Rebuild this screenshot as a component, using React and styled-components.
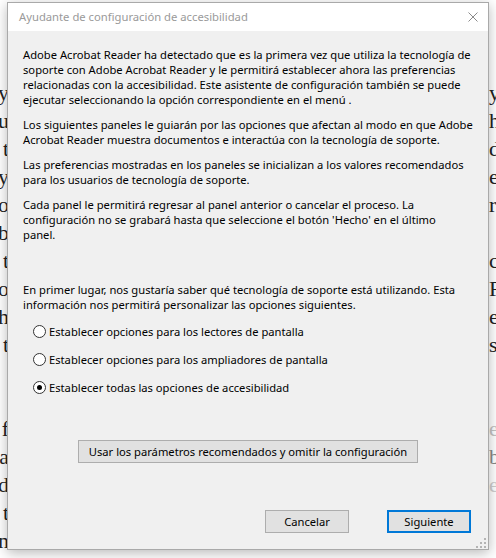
import React from "react";
import styled, { createGlobalStyle } from "styled-components";

const GlobalStyle = createGlobalStyle`
  html, body { margin: 0; padding: 0; background: #ffffff; }
  body { overflow: hidden; }
`;

const Page = styled.div`
  position: relative;
  width: 496px;
  height: 558px;
  overflow: hidden;
  background: #ffffff;
`;

/* ---------- background document (peeks out at the edges) ---------- */
const DocLines = styled.div`
  display: flex;
  flex-direction: column;
  padding-top: 79px;
  font-family: "Liberation Serif", "Times New Roman", serif;
  font-size: 22px;
  color: #222222;
`;

const DocRow = styled.div`
  display: flex;
  justify-content: space-between;
  height: 28px;
  line-height: 28px;
`;

const DocLeft = styled.div`
  width: 9px;
  display: flex;
  justify-content: flex-end;
  white-space: nowrap;
  color: ${(p) => p.$color || "#222222"};
`;

const DocRight = styled.div`
  width: 7px;
  white-space: nowrap;
  color: ${(p) => p.$color || "#222222"};
`;

/* ---------- dialog ---------- */
const Dialog = styled.div`
  position: absolute;
  left: 7px;
  top: 2px;
  width: 482px;
  height: 548px;
  box-sizing: border-box;
  border: 1px solid #a9a9a9;
  background: #f0f0f0;
  box-shadow: 0 3px 12px rgba(0, 0, 0, 0.28);
  display: flex;
  flex-direction: column;
  font-family: "Noto Sans", "Segoe UI", sans-serif;
  font-size: 11.2px;
  color: #000000;
`;

const TitleBar = styled.div`
  height: 28px;
  flex: none;
  background: #ffffff;
  display: flex;
  align-items: center;
  justify-content: space-between;
  padding: 0 10px 0 11px;
`;

const Title = styled.div`
  color: #9a9a9a;
  font-size: 11.25px;
  line-height: 15px;
  padding-bottom: 1px;
`;

const CloseIcon = styled.svg`
  width: 10px;
  height: 10px;
  display: block;
`;

const Body = styled.div`
  flex: 1;
  display: flex;
  flex-direction: column;
  padding: 16px 17px 16px 15px;
  position: relative;
`;

const Para = styled.p`
  margin: 0 0 10px 0;
  line-height: 15px;
  white-space: nowrap;
`;

const Intro = styled.p`
  margin: 30px 0 0 0;
  line-height: 15px;
  white-space: nowrap;
`;

const RadioGroup = styled.div`
  display: flex;
  flex-direction: column;
  margin-top: 5px;
  padding-left: 10px;
`;

const RadioRow = styled.label`
  height: 28px;
  display: flex;
  align-items: center;
  gap: 3px;
  line-height: 15px;
`;

const RadioCircle = styled.span`
  width: 13px;
  height: 13px;
  box-sizing: border-box;
  border: 1px solid #333333;
  border-radius: 50%;
  background: #ffffff;
  display: flex;
  align-items: center;
  justify-content: center;
  flex: none;
  &::after {
    content: "";
    width: 5px;
    height: 5px;
    border-radius: 50%;
    background: #000000;
    display: ${(p) => (p.$checked ? "block" : "none")};
  }
`;

const Button = styled.button`
  height: 23px;
  width: ${(p) => p.$width}px;
  box-sizing: border-box;
  border: ${(p) => (p.$default ? "2px solid #0078d7" : "1px solid #adadad")};
  background: #e1e1e1;
  font-family: "Noto Sans", "Segoe UI", sans-serif;
  font-size: 11.2px;
  color: #000000;
  padding: 0;
  margin: 0;
  line-height: 15px;
  display: flex;
  align-items: center;
  justify-content: center;
  flex: none;
`;

const CenterRow = styled.div`
  display: flex;
  justify-content: center;
  margin-top: 39px;
  margin-right: -2px;
`;

const Footer = styled.div`
  margin-top: auto;
  display: flex;
  justify-content: flex-end;
  gap: 38px;
`;

const Grip = styled.svg`
  position: absolute;
  right: 2px;
  bottom: 1px;
  width: 10px;
  height: 10px;
`;

const docRows = [
  ["y", "y"],
  ["u", "h"],
  ["t", "d"],
  ["y", "e"],
  ["o", "r"],
  ["b", ""],
  ["t", "c"],
  ["o", "R"],
  ["h", "e"],
  ["t", "s"],
  ["", ""],
  ["", ""],
  ["f", "e", "#c4c4c4"],
  ["a", "b", "#8a8a8a"],
  ["d", "e", "#cfcfcf"],
  ["t", ""],
  ["n", ""],
];

const paragraphs = [
  [
    "Adobe Acrobat Reader ha detectado que es la primera vez que utiliza la tecnología de",
    "soporte con Adobe Acrobat Reader y le permitirá establecer ahora las preferencias",
    "relacionadas con la accesibilidad. Este asistente de configuración también se puede",
    "ejecutar seleccionando la opción correspondiente en el menú .",
  ],
  [
    "Los siguientes paneles le guiarán por las opciones que afectan al modo en que Adobe",
    "Acrobat Reader muestra documentos e interactúa con la tecnología de soporte.",
  ],
  [
    "Las preferencias mostradas en los paneles se inicializan a los valores recomendados",
    "para los usuarios de tecnología de soporte.",
  ],
  [
    "Cada panel le permitirá regresar al panel anterior o cancelar el proceso. La",
    "configuración no se grabará hasta que seleccione el botón 'Hecho' en el último",
    "panel.",
  ],
];

const options = [
  { label: "Establecer opciones para los lectores de pantalla", checked: false },
  { label: "Establecer opciones para los ampliadores de pantalla", checked: false },
  { label: "Establecer todas las opciones de accesibilidad", checked: true },
];

const Lines = ({ lines }) =>
  lines.map((l, i) => (
    <React.Fragment key={i}>
      {l}
      {i < lines.length - 1 && <br />}
    </React.Fragment>
  ));

export default function App() {
  return (
    <Page>
      <GlobalStyle />
      <DocLines>
        {docRows.map(([l, r, rc], i) => (
          <DocRow key={i}>
            <DocLeft>{l}</DocLeft>
            <DocRight $color={rc}>{r}</DocRight>
          </DocRow>
        ))}
      </DocLines>

      <Dialog>
        <TitleBar>
          <Title>Ayudante de configuración de accesibilidad</Title>
          <CloseIcon viewBox="0 0 10 10">
            <path d="M0.5 0.5 L9.5 9.5 M9.5 0.5 L0.5 9.5" stroke="#8a8a8a" strokeWidth="1" fill="none" />
          </CloseIcon>
        </TitleBar>
        <Body>
          {paragraphs.map((p, i) => (
            <Para key={i}>
              <Lines lines={p} />
            </Para>
          ))}
          <Intro>
            <Lines
              lines={[
                "En primer lugar, nos gustaría saber qué tecnología de soporte está utilizando. Esta",
                "información nos permitirá personalizar las opciones siguientes.",
              ]}
            />
          </Intro>
          <RadioGroup>
            {options.map((o, i) => (
              <RadioRow key={i}>
                <RadioCircle $checked={o.checked} />
                <span>{o.label}</span>
              </RadioRow>
            ))}
          </RadioGroup>
          <CenterRow>
            <Button $width={340}>Usar los parámetros recomendados y omitir la configuración</Button>
          </CenterRow>
          <Footer>
            <Button $width={84}>Cancelar</Button>
            <Button $width={84} $default>
              Siguiente
            </Button>
          </Footer>
          <Grip viewBox="0 0 10 10">
            <g fill="#b4b4b4">
              <rect x="8" y="0" width="2" height="2" />
              <rect x="4" y="4" width="2" height="2" />
              <rect x="8" y="4" width="2" height="2" />
              <rect x="0" y="8" width="2" height="2" />
              <rect x="4" y="8" width="2" height="2" />
              <rect x="8" y="8" width="2" height="2" />
            </g>
          </Grip>
        </Body>
      </Dialog>
    </Page>
  );
}
